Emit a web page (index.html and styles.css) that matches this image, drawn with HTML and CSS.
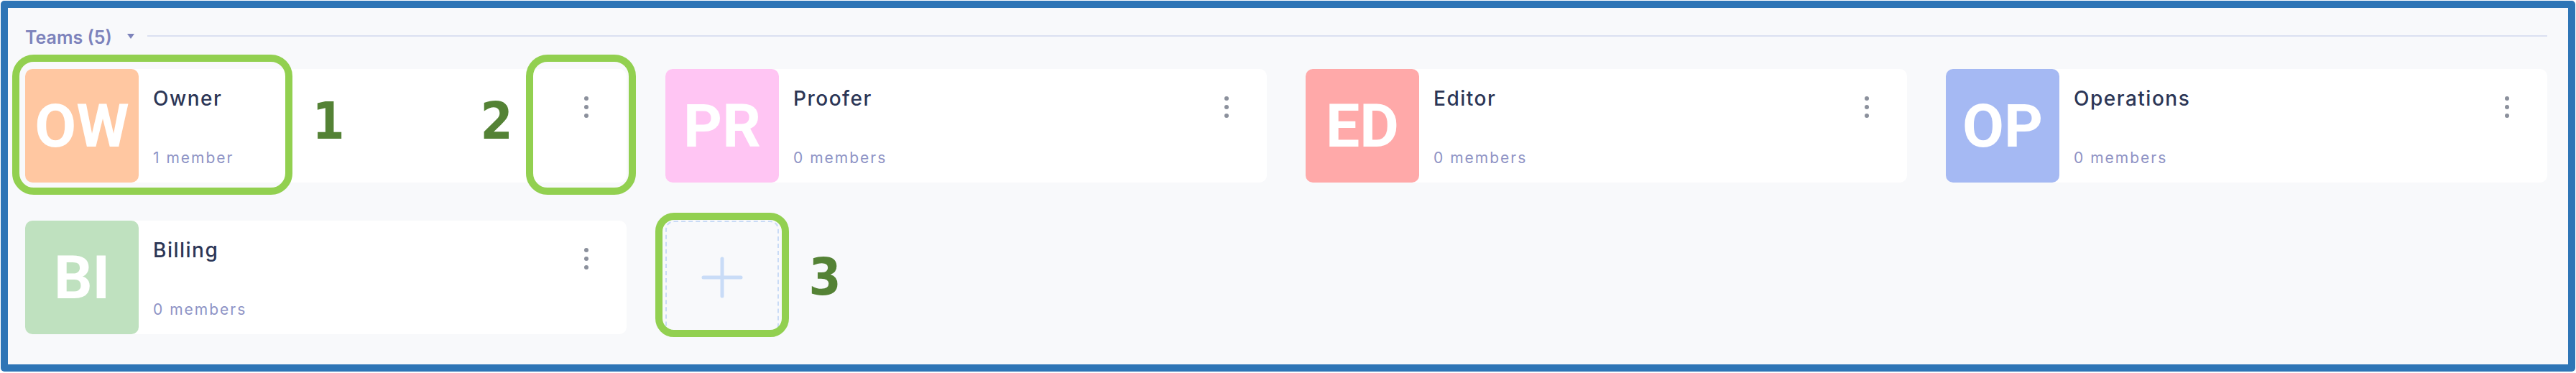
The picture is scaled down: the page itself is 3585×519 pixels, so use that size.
FILE: index.html
```html
<!DOCTYPE html>
<html lang="en">
  <head>
    <meta charset="UTF-8" />
    <title>Teams</title>
    <link rel="stylesheet" href="styles.css">
  </head>
  <body>
    <div class="frame">
      <section class="teams">
        <header class="teams-head">
          <span class="teams-title">Teams (5)</span>
          <span class="caret"></span>
          <span class="rule"></span>
        </header>

        <div class="team-grid">
          <div class="team-card">
            <div class="avatar avatar-ow">OW</div>
            <div class="team-body">
              <div class="team-info">
                <div class="team-name">Owner</div>
                <div class="team-count">1 member</div>
              </div>
              <svg class="kebab" width="6" height="30" viewBox="0 0 6 30"><circle cx="3" cy="3" r="3"/><circle cx="3" cy="15" r="3"/><circle cx="3" cy="27" r="3"/></svg>
            </div>
          </div>

          <div class="team-card">
            <div class="avatar avatar-pr">PR</div>
            <div class="team-body">
              <div class="team-info">
                <div class="team-name">Proofer</div>
                <div class="team-count">0 members</div>
              </div>
              <svg class="kebab" width="6" height="30" viewBox="0 0 6 30"><circle cx="3" cy="3" r="3"/><circle cx="3" cy="15" r="3"/><circle cx="3" cy="27" r="3"/></svg>
            </div>
          </div>

          <div class="team-card">
            <div class="avatar avatar-ed">ED</div>
            <div class="team-body">
              <div class="team-info">
                <div class="team-name">Editor</div>
                <div class="team-count">0 members</div>
              </div>
              <svg class="kebab" width="6" height="30" viewBox="0 0 6 30"><circle cx="3" cy="3" r="3"/><circle cx="3" cy="15" r="3"/><circle cx="3" cy="27" r="3"/></svg>
            </div>
          </div>

          <div class="team-card">
            <div class="avatar avatar-op">OP</div>
            <div class="team-body">
              <div class="team-info">
                <div class="team-name">Operations</div>
                <div class="team-count">0 members</div>
              </div>
              <svg class="kebab" width="6" height="30" viewBox="0 0 6 30"><circle cx="3" cy="3" r="3"/><circle cx="3" cy="15" r="3"/><circle cx="3" cy="27" r="3"/></svg>
            </div>
          </div>

          <div class="team-card">
            <div class="avatar avatar-bi">BI</div>
            <div class="team-body">
              <div class="team-info">
                <div class="team-name">Billing</div>
                <div class="team-count">0 members</div>
              </div>
              <svg class="kebab" width="6" height="30" viewBox="0 0 6 30"><circle cx="3" cy="3" r="3"/><circle cx="3" cy="15" r="3"/><circle cx="3" cy="27" r="3"/></svg>
            </div>
          </div>

          <button class="add-team" title="Add team">
            <svg width="58" height="58" viewBox="0 0 58 58"><path d="M29 3v52M3 29h52"/></svg>
          </button>
        </div>
      </section>
    </div>

    <!-- callouts drawn over the screenshot -->
    <div class="callout callout-1"></div>
    <div class="callout callout-2"></div>
    <div class="callout callout-3"></div>
    <span class="callout-num num-1">1</span>
    <span class="callout-num num-2">2</span>
    <span class="callout-num num-3">3</span>
  </body>
</html>
```

FILE: styles.css
```css
body {
  margin: 0;
  background: #ffffff;
  position: relative;
  font-family: Inter, "Liberation Sans", sans-serif;
}

.frame {
  margin: 1px;
  height: 516px;
  box-sizing: border-box;
  border: 10px solid #2e75b6;
  border-radius: 5px;
  background: #f8f9fb;
}

.teams {
  padding: 21px 29px 0 24px;
}

.teams-head {
  display: flex;
  align-items: center;
  height: 40px;
  margin-bottom: 24px;
}

.teams-title {
  font-size: 25px;
  font-weight: 600;
  color: #7d83bb;
}

.caret {
  width: 0;
  height: 0;
  margin: 0 18px 4px 21px;
  border-left: 5px solid transparent;
  border-right: 5px solid transparent;
  border-top: 7px solid #7d83bb;
}

.rule {
  flex: 1;
  height: 2px;
  margin-bottom: 4px;
  background: #dbe0f1;
}

.team-grid {
  display: grid;
  grid-template-columns: repeat(4, 1fr);
  gap: 53px 54px;
}

.team-card {
  display: flex;
  height: 158px;
  background: #ffffff;
  border-radius: 10px;
}

.avatar {
  width: 158px;
  height: 158px;
  flex: none;
  display: flex;
  align-items: center;
  justify-content: center;
  border-radius: 10px;
  color: #ffffff;
  font-family: Roboto, "Liberation Sans", sans-serif;
  font-weight: 700;
  font-size: 84px;
}

.avatar-ow { background: #ffc7a1; }
.avatar-pr { background: #ffc5f3; }
.avatar-ed { background: #ffa9a9; }
.avatar-op { background: #a5b9f3; }
.avatar-bi { background: #bfe1bf; }

.team-body {
  flex: 1;
  display: flex;
  justify-content: space-between;
  padding: 0 53px 0 20px;
}

.team-info {
  display: flex;
  flex-direction: column;
  justify-content: space-between;
  padding: 27px 0 24px;
}

.team-name {
  font-size: 28px;
  line-height: 28px;
  font-weight: 500;
  letter-spacing: 1.5px;
  color: #2c3656;
}

.team-count {
  font-size: 21px;
  line-height: 21px;
  letter-spacing: 2px;
  color: #8e93c5;
}

.kebab {
  margin-top: 38px;
  fill: #8b909c;
}

.add-team {
  width: 158px;
  height: 158px;
  padding: 0;
  display: flex;
  align-items: center;
  justify-content: center;
  background: transparent;
  border: 2px dashed #c9dbf6;
  border-radius: 12px;
  cursor: pointer;
}

.add-team svg {
  stroke: #c9dcf7;
  stroke-width: 5;
  stroke-linecap: round;
}

.callout {
  position: absolute;
  box-sizing: border-box;
  border: 10px solid #92d050;
  border-radius: 30px;
}

.callout-1 { left: 17px; top: 76px; width: 390px; height: 195px; }
.callout-2 { left: 732px; top: 76px; width: 153px; height: 195px; }
.callout-3 { left: 912px; top: 296px; width: 186px; height: 173px; border-radius: 26px; }

.callout-num {
  position: absolute;
  width: 60px;
  text-align: center;
  font-family: "DejaVu Sans", sans-serif;
  font-stretch: condensed;
  font-weight: 700;
  font-size: 72px;
  line-height: 72px;
  color: #548235;
}

.num-1 { left: 427px; top: 132px; }
.num-2 { left: 661px; top: 132px; }
.num-3 { left: 1118px; top: 349px; }
```
